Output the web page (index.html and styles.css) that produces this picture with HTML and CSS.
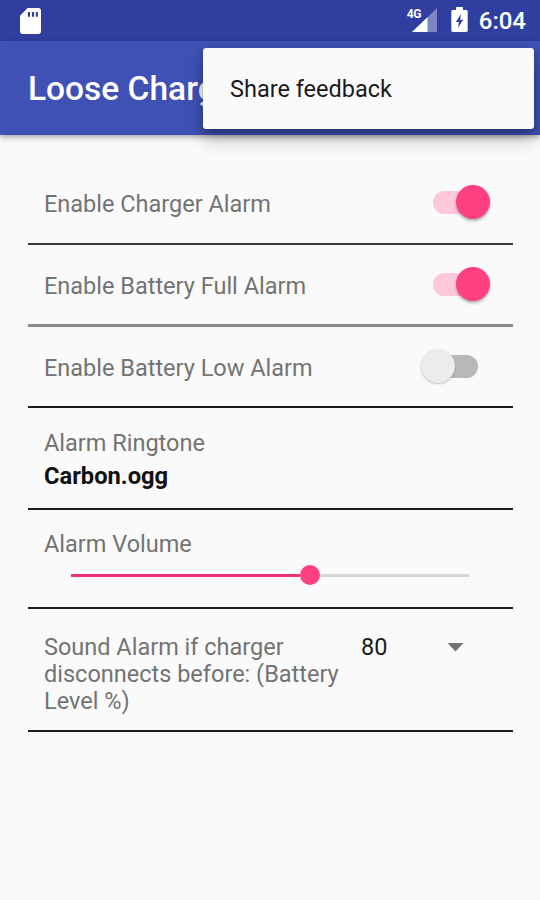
FILE: index.html
```html
<!DOCTYPE html>
<html lang="en">
<head>
    <meta charset="utf-8">
    <title>Loose Charger Alarm</title>
    <link rel="stylesheet" href="styles.css">
</head>
<body>
    <div class="statusbar">
        <svg class="sd-icon" width="21" height="26" viewBox="0 0 22 27">
            <path fill="#fff" d="M8 0H19a3 3 0 0 1 3 3V24a3 3 0 0 1-3 3H3a3 3 0 0 1-3-3V8z"/>
            <path fill="#303f9f" d="M8.300 4h2.200v5h-2.200zM12.500 4h2.200v5h-2.200zM16.500 4h2.200v5h-2.200z"/>
        </svg>
        <div class="status-right">
            <div class="signal">
                <span class="network">4G</span>
                <svg width="25" height="24" viewBox="0 0 25 24">
                    <path fill="#7c86c3" d="M25 0V24H0z"/>
                    <path fill="#fff" d="M15.500 9.200V24H0z"/>
                </svg>
            </div>
            <svg class="battery-icon" width="17" height="25" viewBox="0 0 17 26">
                <path fill="#fff" d="M5 0h7v3h3.500A1.500 1.500 0 0 1 17 4.500v20a1.500 1.500 0 0 1-1.500 1.500h-14A1.500 1.500 0 0 1 0 24.500v-20A1.500 1.500 0 0 1 1.500 3H5z"/>
                <path fill="#303f9f" d="M10 7.200 4.700 15.500h3.100L7 21.500l5.300-8.300H9.200z"/>
            </svg>
            <span class="clock">6:04</span>
        </div>
    </div>

    <div class="appbar">
        <h1>Loose Charger Alarm</h1>
    </div>

    <div class="menu">Share feedback</div>

    <div class="settings">
        <div class="row first">
            <span>Enable Charger Alarm</span>
            <div class="switch on"><div class="thumb"></div></div>
        </div>
        <div class="row soft">
            <span>Enable Battery Full Alarm</span>
            <div class="switch on"><div class="thumb"></div></div>
        </div>
        <div class="row">
            <span>Enable Battery Low Alarm</span>
            <div class="switch off"><div class="thumb"></div></div>
        </div>
        <div class="row ringtone">
            <span>Alarm Ringtone</span>
            <b>Carbon.ogg</b>
        </div>
        <div class="row volume">
            <span>Alarm Volume</span>
            <div class="slider">
                <div class="filled"></div>
                <div class="knob"></div>
                <div class="rest"></div>
            </div>
        </div>
        <div class="row level">
            <span class="level-label">Sound Alarm if charger disconnects before: (Battery Level %)</span>
            <div class="select">
                <span>80</span>
                <svg width="17" height="9" viewBox="0 0 17 9"><path fill="#737373" d="M0.500 0h16L8.500 8.500z"/></svg>
            </div>
        </div>
    </div>
</body>
</html>
```
FILE: styles.css
```css
* {
    box-sizing: border-box;
}
body {
    margin: 0;
    height: 900px;
    overflow: hidden;
    background-color: #fafafa;
    color: #737373;
    font-family: Roboto, sans-serif;
    font-size: 23.5px;
    line-height: 27px;
}
.statusbar {
    display: flex;
    justify-content: space-between;
    height: 41px;
    padding: 7px 14px 0 20px;
    background-color: #303f9f;
    color: white;
}
.status-right {
    display: flex;
}
.signal {
    position: relative;
    width: 30px;
    padding: 1px 0 0 5px;
    margin-right: 14px;
}
.network {
    position: absolute;
    left: 0;
    top: 1px;
    font-size: 12px;
    line-height: 13px;
    font-weight: 700;
    letter-spacing: -0.5px;
}
.signal svg,
.battery-icon,
.sd-icon {
    display: block;
}
.sd-icon {
    margin-top: 1px;
}
.clock {
    margin-left: 11px;
    padding-top: 1px;
    font-size: 24px;
    font-weight: 500;
}
.appbar {
    height: 94px;
    padding: 28px 28px 0;
    background-color: #3f51b5;
    box-shadow: 0 2px 6px rgba(0, 0, 0, 0.35);
}
h1 {
    width: 175px;
    margin: 0;
    overflow: hidden;
    color: white;
    font-size: 33.5px;
    line-height: 40px;
    font-weight: 500;
    white-space: nowrap;
}
.menu {
    position: absolute;
    left: 203px;
    top: 48px;
    width: 331px;
    height: 81px;
    padding: 28px 27px;
    border-radius: 3px;
    background-color: #fafafa;
    color: #1a1a1a;
    box-shadow: 0 10px 18px rgba(0, 0, 0, 0.25), 0 2px 6px rgba(0, 0, 0, 0.25);
}
.settings {
    margin: 28px 27px 0 28px;
}
.row {
    display: flex;
    justify-content: space-between;
    height: 82px;
    padding: 29px 23px 0 16px;
    border-bottom: 2px solid #1c1c1c;
}
.row.first {
    border-color: #3a3a3a;
    padding-top: 28px;
}
.row.soft {
    height: 82px;
    border-bottom: 3px solid #8c8c8c;
    padding-top: 28px;
}
.row.soft + .row {
    height: 81px;
    padding-top: 28px;
}
.switch {
    position: relative;
    height: 23px;
    border-radius: 12px;
}
.switch.on {
    width: 57px;
    background-color: #fdc8da;
}
.switch.off {
    width: 44px;
    margin-right: 12px;
    background-color: #b8b8b8;
}
.thumb {
    position: absolute;
    top: -6px;
    width: 34px;
    height: 34px;
    border-radius: 50%;
    box-shadow: 0 2px 3px rgba(0, 0, 0, 0.3);
}
.on .thumb {
    right: 0;
    background-color: #ff4081;
}
.off .thumb {
    left: -13px;
    background-color: #ececec;
    box-shadow: 0 1px 2px rgba(0, 0, 0, 0.25);
}
.row.ringtone {
    flex-direction: column;
    justify-content: flex-start;
    gap: 6px;
    height: 102px;
    padding-top: 22px;
}
.ringtone b {
    color: #111;
    font-size: 23.7px;
}
.row.volume {
    flex-direction: column;
    justify-content: flex-start;
    height: 99px;
    padding-top: 21px;
}
.slider {
    display: flex;
    align-items: center;
    height: 20px;
    margin: 7px 21px 0 27px;
}
.filled {
    width: 229px;
    height: 3px;
    background-color: #f0307a;
}
.knob {
    width: 20px;
    height: 20px;
    border-radius: 50%;
    background-color: #ff4081;
}
.rest {
    flex: 1;
    height: 3px;
    background-color: #d6d6d6;
}
.row.level {
    height: 123px;
    padding-top: 25px;
}
.level-label {
    width: 310px;
}
.select {
    display: flex;
    justify-content: space-between;
    width: 103px;
    margin-right: 26px;
    color: #1a1a1a;
}
.select svg {
    margin-top: 9px;
}
```
